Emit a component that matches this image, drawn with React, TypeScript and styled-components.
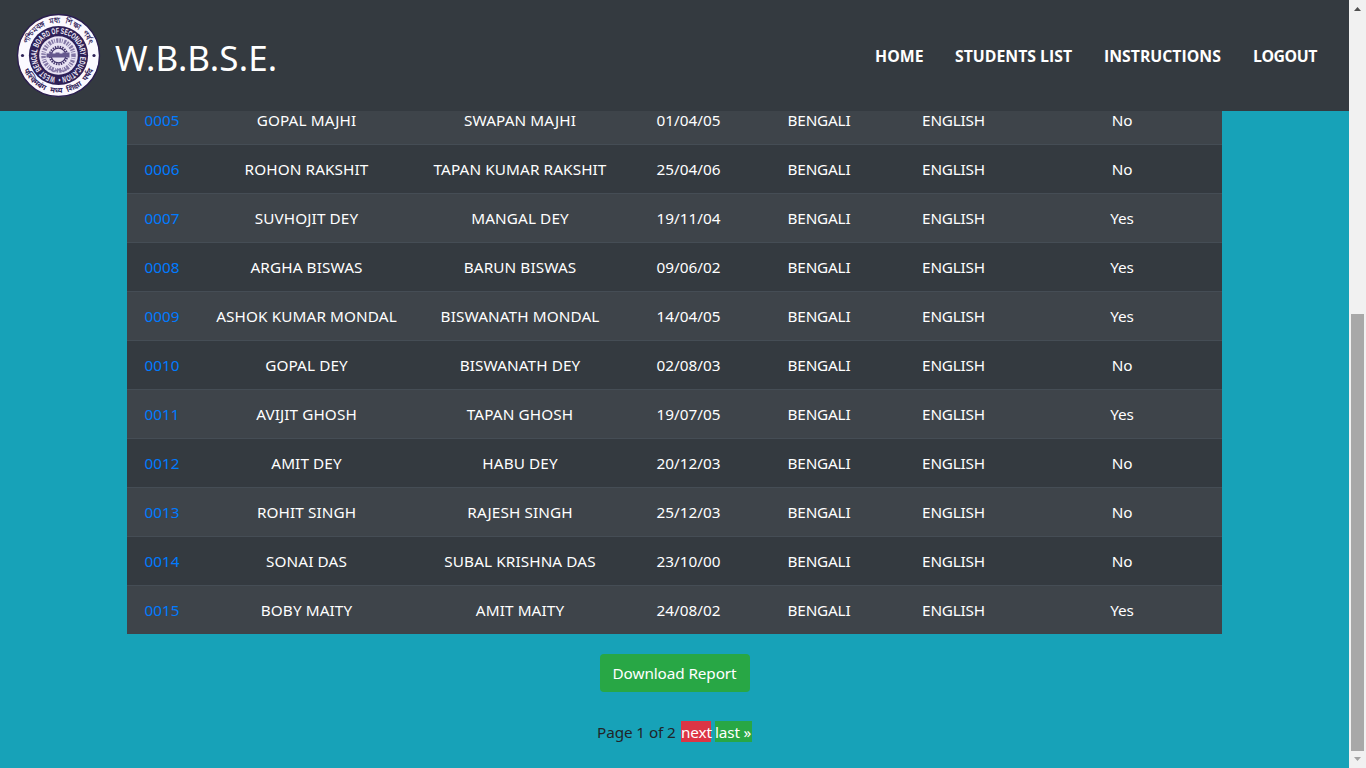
import React from "react";
import styled, { createGlobalStyle } from "styled-components";

const GlobalStyle = createGlobalStyle`
  * { box-sizing: border-box; }
  html, body { margin: 0; height: 100%; overflow: hidden; }
  body {
    font-family: "Noto Sans", "Open Sans", sans-serif;
    font-size: 15.3px;
    line-height: 24px;
    color: #212529;
    background: #17a2b8;
  }
`;

const Window = styled.div`
  display: flex;
  width: 1366px;
  height: 768px;
`;

const Page = styled.div`
  flex: 1;
  display: flex;
  flex-direction: column;
  background: #17a2b8;
`;

const Navbar = styled.header`
  flex: none;
  height: 111px;
  padding: 0 32px 0 16px;
  display: flex;
  align-items: center;
  justify-content: space-between;
  background: #343a40;
`;

const Brand = styled.a`
  display: flex;
  align-items: center;
  gap: 14px;
  color: #fff;
`;

const BrandName = styled.span`
  font-size: 35px;
  line-height: 52px;
  letter-spacing: 0.1px;
  padding-top: 5px;
`;

const Nav = styled.nav`
  display: flex;
  gap: 32px;
  padding-top: 1px;
`;

const NavLink = styled.a<{ $width: number; $spacing: number }>`
  width: ${(p) => p.$width}px;
  color: #fff;
  font-family: "Open Sans", sans-serif;
  font-weight: 700;
  font-size: 15.8px;
  letter-spacing: ${(p) => p.$spacing}px;
  white-space: nowrap;
`;

const Content = styled.main`
  flex: 1;
  min-height: 0;
  overflow: hidden;
  display: flex;
  flex-direction: column;
  justify-content: flex-end;
  align-items: center;
  padding-bottom: 24px;
`;

const Table = styled.div`
  flex: none;
  width: 1095px;
  color: #fff;
`;

const Row = styled.div<{ $striped: boolean }>`
  display: grid;
  grid-template-columns: 70px 219px 208px 129px 132px 137px 200px;
  height: 49px;
  padding-top: 12px;
  border-top: 1px solid #454d55;
  background: ${(p) => (p.$striped ? "#3e444a" : "#343a40")};
  text-align: center;
  white-space: nowrap;
`;

const Cell = styled.span<{ $spacing?: number }>`
  letter-spacing: ${(p) => p.$spacing ?? 0}px;
`;

const RollLink = styled.a`
  color: #007bff;
`;

const DownloadButton = styled.button`
  flex: none;
  width: 150px;
  height: 38px;
  margin-top: 20px;
  padding: 0;
  border: 0;
  border-radius: 4px;
  background: #28a745;
  color: #fff;
  font: inherit;
  letter-spacing: -0.1px;
`;

const Pagination = styled.div`
  flex: none;
  display: flex;
  align-items: flex-start;
  height: 24px;
  margin-top: 28px;
  white-space: nowrap;
`;

const PageInfo = styled.span`
  width: 84px;
  letter-spacing: -0.1px;
`;

const PageLink = styled.a<{ $color: string; $width: number }>`
  width: ${(p) => p.$width}px;
  height: 21px;
  line-height: 22px;
  margin: 1px 4px 0 0;
  letter-spacing: -0.15px;
  color: #fff;
  background: ${(p) => p.$color};

  &:last-child { margin-right: 0; }
`;

const Scrollbar = styled.div`
  width: 17px;
  flex: none;
  display: flex;
  flex-direction: column;
  align-items: center;
  background: #f1f1f1;
`;

const ScrollArrow = styled.svg`
  display: block;
  width: 17px;
  height: 17px;
`;

const ScrollThumb = styled.div`
  width: 13px;
  height: 437px;
  margin: 297px 0 0 0;
  background: #a8a8a8;
`;

const students = [
  ["0005", "GOPAL MAJHI", "SWAPAN MAJHI", "01/04/05", "No"],
  ["0006", "ROHON RAKSHIT", "TAPAN KUMAR RAKSHIT", "25/04/06", "No"],
  ["0007", "SUVHOJIT DEY", "MANGAL DEY", "19/11/04", "Yes"],
  ["0008", "ARGHA BISWAS", "BARUN BISWAS", "09/06/02", "Yes"],
  ["0009", "ASHOK KUMAR MONDAL", "BISWANATH MONDAL", "14/04/05", "Yes"],
  ["0010", "GOPAL DEY", "BISWANATH DEY", "02/08/03", "No"],
  ["0011", "AVIJIT GHOSH", "TAPAN GHOSH", "19/07/05", "Yes"],
  ["0012", "AMIT DEY", "HABU DEY", "20/12/03", "No"],
  ["0013", "ROHIT SINGH", "RAJESH SINGH", "25/12/03", "No"],
  ["0014", "SONAI DAS", "SUBAL KRISHNA DAS", "23/10/00", "No"],
  ["0015", "BOBY MAITY", "AMIT MAITY", "24/08/02", "Yes"],
];

function Seal() {
  return (
    <svg width="85" height="85" viewBox="-42.5 -42.5 85 85">
      <defs>
        <path id="topArc" d="M-32.5 0A32.5 32.5 0 0 1 32.5 0" />
        <path id="bottomArc" d="M-37.5 0A37.5 37.5 0 0 0 37.5 0" />
        <path id="motto" d="M0 21.8A21.8 21.8 0 0 1 0 -21.8A21.8 21.8 0 0 1 0 21.8" />
      </defs>
      <circle r="41" fill="#fbf9ff" stroke="#2b1e4f" strokeWidth="1.4" />
      <circle r="29.6" fill="#2d2057" />
      <circle r="19.3" fill="#e9e4f4" />
      <g fill="#33265c" fontSize="7.6" fontWeight="700" wordSpacing="3">
        <text textAnchor="middle"><textPath href="#topArc" startOffset="50%">পশ্চিমবঙ্গ মধ্য শিক্ষা পর্ষৎ</textPath></text>
        <text textAnchor="middle"><textPath href="#bottomArc" startOffset="50%">पश्चिमबंग मध्य शिक्षा पर्षद</textPath></text>
      </g>
      <text fill="#f4f0fc" fontFamily="Liberation Sans, sans-serif" fontSize="8.4" fontWeight="700">
        <textPath href="#motto" startOffset="3" textLength="133" lengthAdjust="spacingAndGlyphs">WEST BENGAL BOARD OF SECONDARY EDUCATION •</textPath>
      </text>
      <circle r="15" fill="none" stroke="#8378a6" strokeWidth="4.5" strokeDasharray="1.6 1 .8 1.3 2.2 1" />
      <circle r="8.8" fill="none" stroke="#41346b" strokeWidth="2" strokeDasharray="1.4 1.1" />
      <circle r="7.3" fill="#e9e4f4" stroke="#41346b" strokeWidth="1.2" />
      <path d="M-12 2V-2h3v-1.5h3V-2h3v-1h4v1h3v-1h7v5z" fill="#65588d" />
      <path d="M-9 13l4 3 5-2 5 2 4-3" fill="none" stroke="#8478a8" strokeWidth="1.4" />
      <circle cx="-36" r="1.6" fill="#2d2057" />
      <circle cx="35.5" r="1.6" fill="#2d2057" />
    </svg>
  );
}

export default function App() {
  return (
    <>
      <GlobalStyle />
      <Window>
        <Page>
          <Navbar>
            <Brand>
              <Seal />
              <BrandName>W.B.B.S.E.</BrandName>
            </Brand>
            <Nav>
              <NavLink $width={48} $spacing={0.1}>HOME</NavLink>
              <NavLink $width={117} $spacing={0}>STUDENTS LIST</NavLink>
              <NavLink $width={117} $spacing={0}>INSTRUCTIONS</NavLink>
              <NavLink $width={64} $spacing={-0.45}>LOGOUT</NavLink>
            </Nav>
          </Navbar>
          <Content>
            <Table>
              {students.map(([roll, name, father, birth, passed], i) => (
                <Row key={roll} $striped={i % 2 === 0}>
                  <Cell><RollLink>{roll}</RollLink></Cell>
                  <Cell $spacing={0.1}>{name}</Cell>
                  <Cell $spacing={0.1}>{father}</Cell>
                  <Cell>{birth}</Cell>
                  <Cell $spacing={-0.2}>BENGALI</Cell>
                  <Cell $spacing={-0.2}>ENGLISH</Cell>
                  <Cell $spacing={-0.1}>{passed}</Cell>
                </Row>
              ))}
            </Table>
            <DownloadButton>Download Report</DownloadButton>
            <Pagination>
              <PageInfo>Page 1 of 2</PageInfo>
              <PageLink $color="#dc3545" $width={30}>next</PageLink>
              <PageLink $color="#28a745" $width={37}>last »</PageLink>
            </Pagination>
          </Content>
        </Page>
        <Scrollbar>
          <ScrollArrow viewBox="0 0 17 17"><path d="M5 11l3.5-4 3.5 4z" fill="#505050" /></ScrollArrow>
          <ScrollThumb />
          <ScrollArrow viewBox="0 0 17 17"><path d="M5 6l3.5 4L12 6z" fill="#a3a3a3" /></ScrollArrow>
        </Scrollbar>
      </Window>
    </>
  );
}
